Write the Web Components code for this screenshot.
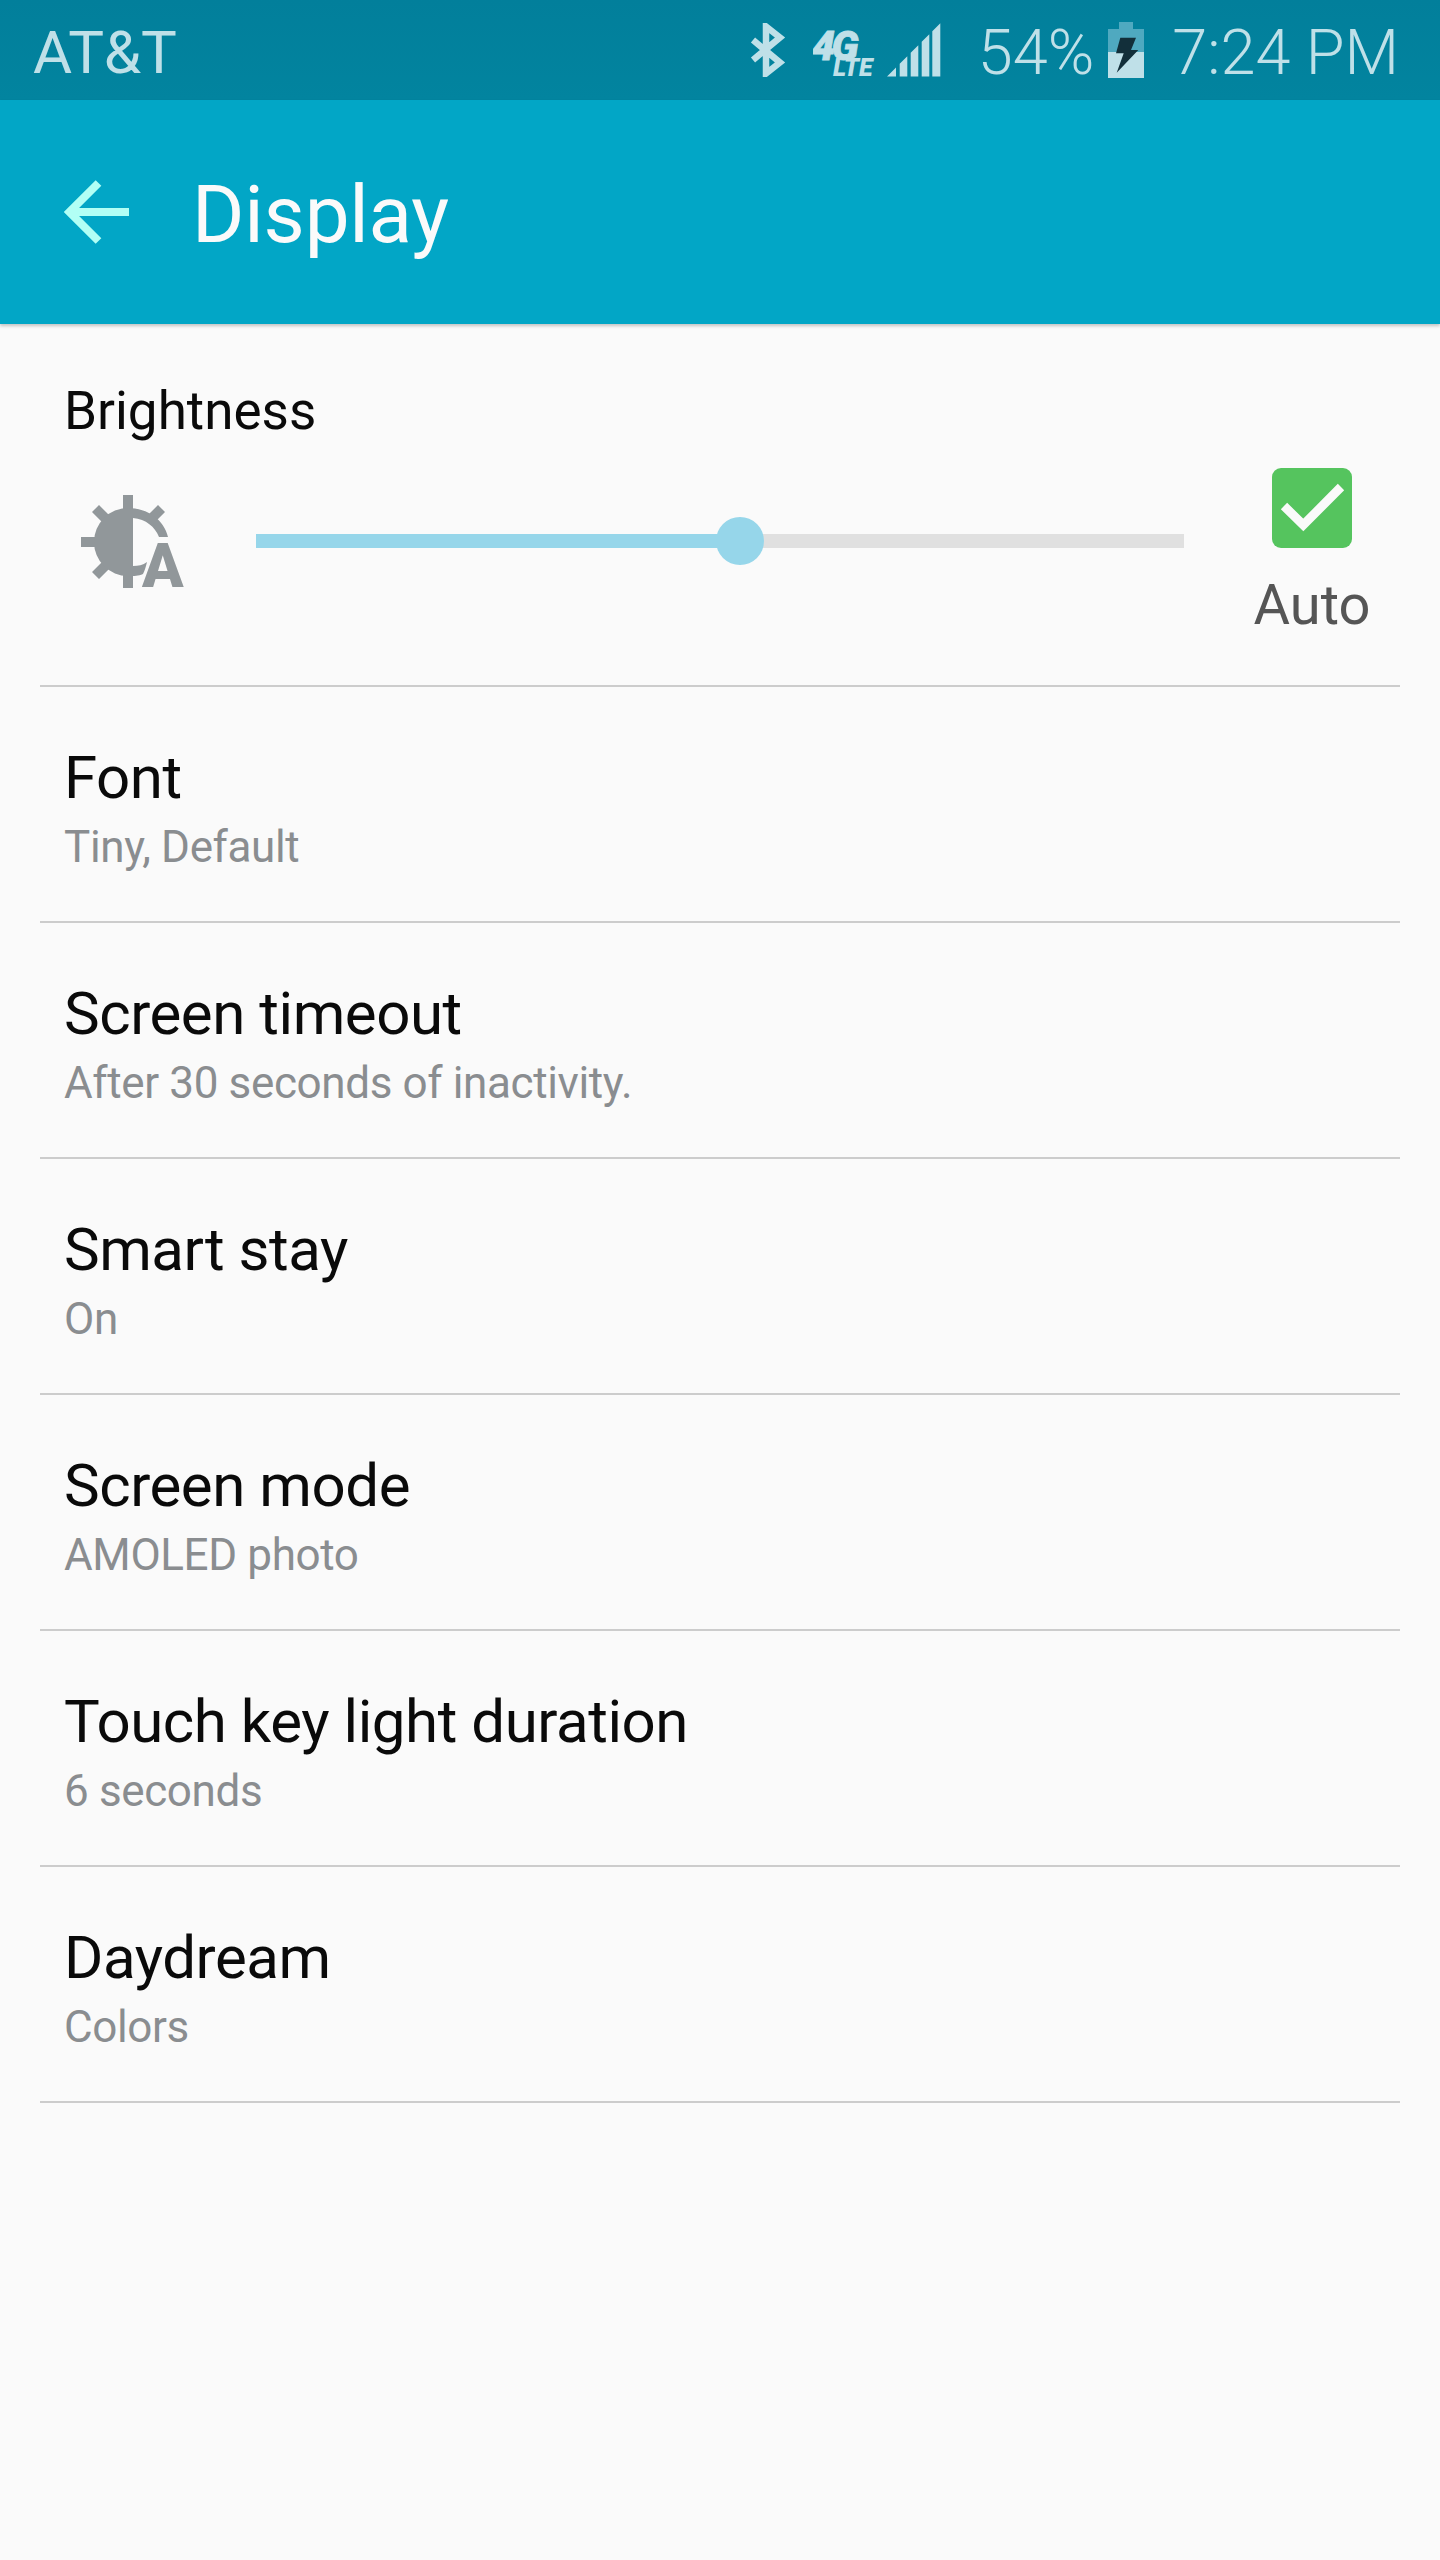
<!DOCTYPE html>
<html lang="en">
<head>
<meta charset="utf-8">
<title>Display</title>
<style>
html,body{margin:0;padding:0;background:#fafafa;font-family:Roboto,"Liberation Sans",sans-serif;}
body{width:1440px;height:2560px;overflow:hidden;}
</style>
</head>
<body>
<status-bar></status-bar>
<action-bar>Display</action-bar>
<brightness-panel></brightness-panel>
<setting-row label="Font" value="Tiny, Default"></setting-row>
<setting-row label="Screen timeout" value="After 30 seconds of inactivity."></setting-row>
<setting-row label="Smart stay" value="On"></setting-row>
<setting-row label="Screen mode" value="AMOLED photo"></setting-row>
<setting-row label="Touch key light duration" value="6 seconds"></setting-row>
<setting-row label="Daydream" value="Colors"></setting-row>
<script>
function def(name, html, init){
  customElements.define(name, class extends HTMLElement{
    constructor(){super();this.attachShadow({mode:'open'}).innerHTML=html;}
    connectedCallback(){if(init)init(this);}
  });
}
def('status-bar',`<style>
:host{display:flex;align-items:center;height:100px;box-sizing:border-box;padding:0 41px 0 33px;
background:linear-gradient(#027f9b,#02849f);color:#bfe0e8;font:300 63px/70px Roboto,sans-serif;}
.carrier{flex:1;font:400 60px/70px Roboto,sans-serif;margin-top:5px;letter-spacing:-.2px;}
svg{display:block;flex:none;}
.num{margin-top:5px;}
</style>
<span class="carrier">AT&amp;T</span>
<svg width="37" height="54" viewBox="0 0 37 54" style="margin-right:27px"><path d="M4 17L31 39.500 17 50.500V3.500L31 14.500 4 37" fill="none" stroke="#bfe0e8" stroke-width="6.500"/></svg>
<svg width="62" height="76" viewBox="0 -14 62 76" style="margin-right:12px;margin-top:12px"><text x="-1" y="28" font-family="Roboto,sans-serif" font-weight="900" font-style="italic" font-size="41" letter-spacing="-3.500" fill="#bfe0e8" stroke="#bfe0e8" stroke-width=".8">4G</text><text x="20" y="44" font-family="Roboto,sans-serif" font-weight="900" font-style="italic" font-size="25" letter-spacing="0" fill="#bfe0e8">LTE</text></svg>
<svg width="54" height="54" viewBox="0 0 54 54" style="margin-right:37px"><path fill="#bfe0e8" d="M0 53.500 9 44.500V53.500ZM12.700 40.800 20.300 33.200V53.500H12.700ZM23.700 29.800 31.300 22.200V53.500H23.700ZM34.700 18.800 42.300 11.200V53.500H34.700ZM45.300 8.200 53.300 .2V53.500H45.300Z"/></svg>
<span class="num" style="margin-right:14px">54%</span>
<svg width="36" height="56" viewBox="0 0 36 56" style="margin-right:28px"><path fill="#4fa9c0" d="M11 0H25V7H36V30H0V7H11Z"/><rect y="30" width="36" height="26" fill="#bfe0e8"/><path fill="#122f3a" d="M12.300 15.700H28L23 28H30.300L8.700 50.700 15.700 31.300H8Z"/></svg>
<span class="num">7:24 PM</span>`);
def('action-bar',`<style>
:host{display:flex;align-items:center;height:224px;background:#02a6c6;color:#fafafa;
font:400 80px/94px Roboto,sans-serif;box-shadow:0 2px 3px rgba(0,0,0,.22);padding-left:64px;}
svg{display:block;margin-right:63px;flex:none;}
.t{margin-top:5px;letter-spacing:-.2px;}
</style>
<svg width="65" height="64" viewBox="0 0 65 64"><path d="M65 32H6M34.500 3 5.500 32 34.500 61" fill="none" stroke="#b2fff5" stroke-width="8"/></svg>
<span class="t"><slot></slot></span>`);
def('brightness-panel',`<style>
:host{display:block;margin:0 40px;border-bottom:2px solid #ccc;height:363px;box-sizing:border-box;padding-top:55px;}
.title{font:400 53px/64px Roboto,sans-serif;color:#0a0a0a;padding-left:24px;}
.row{display:flex;align-items:flex-start;margin-top:25px;padding-left:41px;}
.icon{display:block;margin-top:27px;margin-right:69px;flex:none;}
.slider{position:relative;width:928px;height:14px;margin-top:66px;background:#e0e0e0;flex:none;}
.fill{width:484px;height:14px;background:#96d6ea;}
.thumb{position:absolute;left:460px;top:-17px;width:48px;height:48px;border-radius:50%;background:#96d6ea;}
.auto{display:flex;flex-direction:column;align-items:center;width:116px;margin-left:70px;flex:none;}
.box{display:block;}
.label{font:400 56px/64px Roboto,sans-serif;color:#555;margin-top:25px;}
</style>
<div class="title">Brightness</div>
<div class="row">
<svg class="icon" width="106" height="110" viewBox="0 0 106 110">
<g fill="#91979a">
<rect x="42" y="0" width="10" height="93"/>
<rect x="0" y="42" width="18" height="10"/>
<path d="M11 17 18 10 31 23 24 30ZM11 77 18 84 31 71 24 64ZM77 10 84 17 71 30 64 23Z"/>
<path d="M47 13A34 34 0 0 0 47 81C54 81 57 81 62 79 64 75 65 71 66 67 62 70 57 71 52 71V23C65 24 74 32 78 42H87C83 25 67 13 47 13Z"/>
<text x="61" y="92" font-family="Roboto,sans-serif" font-weight="900" font-size="61">A</text>
</g></svg>
<div class="slider"><div class="fill"></div><div class="thumb"></div></div>
<div class="auto">
<svg class="box" width="80" height="80" viewBox="0 0 80 80"><rect width="80" height="80" rx="9" fill="#55c45e"/><path d="M12 38 31.300 57 69 19" fill="none" stroke="#fafafa" stroke-width="9"/></svg>
<span class="label">Auto</span>
</div>
</div>`);
def('setting-row',`<style>
:host{display:block;margin:0 40px;height:236px;box-sizing:border-box;border-bottom:2px solid #ccc;padding:56px 0 0 24px;}
.t{font:400 60px/70px Roboto,sans-serif;letter-spacing:-.45px;color:#0a0a0a;}
.s{font:400 44px/52px Roboto,sans-serif;letter-spacing:-.37px;color:#8a8d90;margin-top:8px;}
</style>
<div class="t"></div><div class="s"></div>`,function(el){
  el.shadowRoot.querySelector('.t').textContent=el.getAttribute('label');
  el.shadowRoot.querySelector('.s').textContent=el.getAttribute('value');
});
</script>
</body>
</html>
